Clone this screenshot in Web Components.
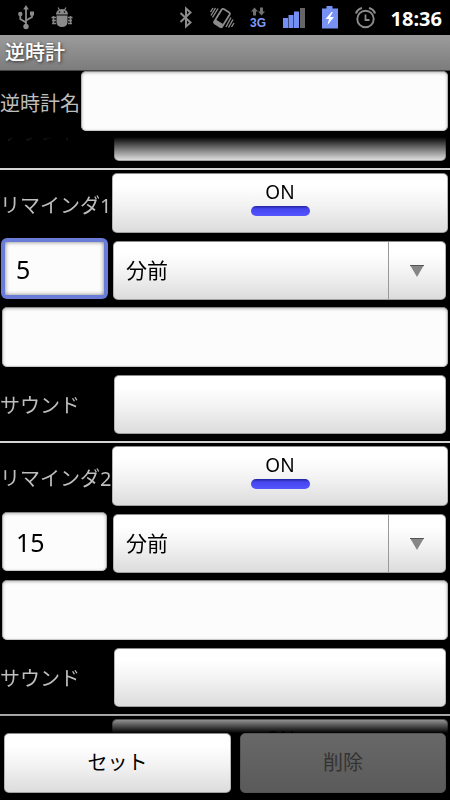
<!DOCTYPE html>
<html lang="ja">
<head>
<meta charset="utf-8">
<meta name="viewport" content="width=device-width, initial-scale=1">
<title>逆時計</title>
<style>
  html, body { margin: 0; height: 100%; background: #000; }
  body { font: 20px/24px "Noto Sans", "Noto Sans CJK JP", sans-serif; color: #bebebe; }
</style>
</head>
<body>
<countdown-app></countdown-app>

<script>
const CONTROLS = `
  * { box-sizing: border-box; }
  button, input, select { font: inherit; color: #000; margin: 0; border-radius: 5px; outline: none; min-width: 0; width: 100%; }
  button, select {
    border: 1px solid; border-color: #8c8c8c #b4b4b4 #a0a0a0;
    background: linear-gradient(#fff 20%, #f2f2f2 55%, #dcdcdc);
  }
  input {
    border: 1px solid; border-color: #8a8a8a #b0b0b0 #c8c8c8;
    background: #fcfcfc; box-shadow: inset 0 1px 3px #bbb;
    height: 60px; padding: 0 13px; font-size: 25px;
  }
  label { white-space: nowrap; padding-top: 6px; }
`;

function define(name, css, html, setup) {
  customElements.define(name, class extends HTMLElement {
    connectedCallback() {
      if (this.shadowRoot) return;
      const root = this.attachShadow({ mode: 'open' });
      root.innerHTML = `<style>${CONTROLS}${css}</style>${typeof html === 'function' ? html(this) : html}`;
      if (setup) setup(this, root);
    }
  });
}

const ICONS = {
  usb: `<g fill="none" stroke="#8b8b8b" stroke-width="1.8"><path d="M13 3V21M13 17.5L7.300 14V9M13 15.500L19 12V8"/></g>
    <g fill="#8b8b8b"><path d="M13 0l2.800 4.500h-5.600z"/><circle cx="13" cy="21.500" r="2.700"/><circle cx="7.300" cy="9" r="2.200"/><rect x="17" y="6.500" width="4" height="4"/></g>`,
  bug: `<g fill="#8b8b8b"><path d="M7 9.500a6 5.500 0 0 1 12 0z"/><path d="M7.500 10.500h11v7a5.500 4.500 0 0 1-11 0z"/></g>
    <path d="M9 2.500l1.800 3M17 2.500l-1.800 3" stroke="#8b8b8b" stroke-width="1.200"/>
    <path d="M2.500 12.500h4.500M19 12.500h4.500M3 15.500h4M19 15.500h4M3 18.500h4M19 18.500h4M4.500 11v8M21.500 11v8" stroke="#858585" stroke-width="1.600"/>
    <circle cx="10.500" cy="7" r=".8" fill="#000"/><circle cx="15.500" cy="7" r=".8" fill="#000"/>`,
  bluetooth: `<path d="M7.500 8l10 9.500-4.500 4V3.500l4.500 4-10 9.500" fill="none" stroke="#8b8b8b" stroke-width="2"/>`,
  vibrate: `<g transform="rotate(32 13 13)"><rect x="8.300" y="4.500" width="9.400" height="17" rx="1.500" fill="none" stroke="#8b8b8b" stroke-width="1.800"/><rect x="8" y="17.500" width="10" height="4" fill="#8b8b8b"/></g>
    <path d="M6.500 3L2 10.500M9 3.500L3.500 12.500M4 3L1.500 7M19.500 22.500L24 14.500M17 22L22 12.500M22.500 22L25 18" stroke="#8b8b8b" stroke-width="1.400"/>`,
  data: `<path d="M9.500 2.500l3.500 4h-2v4h-3v-4h-2zM16.500 10.500l-3.500-4h2v-4h3v4h2z" fill="#707070"/>
    <text x="13" y="22" text-anchor="middle" font-family="Liberation Sans, sans-serif" font-weight="700" font-size="12" fill="#809bf5">3G</text>`,
  signal: `<g fill="#7590f4"><path d="M2 13h5v10H2z"/><path d="M7.500 10h5v13h-5z"/><path d="M13 6.500h5V23h-5z"/></g><path d="M19 3h5v20h-5z" fill="#666"/>`,
  battery: `<path d="M9.500 1h6v2.500H21V23.500H5V3.500h4.500z" fill="#7690f3"/><path d="M14.500 7L8.500 14h3.500l-1.500 6 6.500-8h-4l3-5z" fill="#fff"/>`,
  alarm: `<g fill="none" stroke="#8b8b8b"><circle cx="12.500" cy="14" r="8.200" stroke-width="1.900"/><path d="M12.500 9.500v5.500h4" stroke-width="1.800"/><path d="M3 8.500Q4 4.500 9 3M22 8.500Q21 4.500 16 3" stroke-width="2.200"/></g>`
};

define('status-icon', `:host { display: block; width: 26px; height: 26px; } svg { display: block; }`,
  el => `<svg width="26" height="26" viewBox="0 0 26 26" aria-hidden="true">${ICONS[el.getAttribute('name')]}</svg>`);

define('status-bar', `
  :host { display: flex; align-items: center; gap: 10px; height: 35px; padding: 0 8px 0 13px; background: #000; box-sizing: border-box; }
  .space { flex: 1; }
  time { color: #fff; font-weight: 700; padding: 2px 0 0 2px; }
`, `
  <status-icon name="usb"></status-icon><status-icon name="bug"></status-icon><span class="space"></span>
  <status-icon name="bluetooth"></status-icon><status-icon name="vibrate"></status-icon><status-icon name="data"></status-icon>
  <status-icon name="signal"></status-icon><status-icon name="battery"></status-icon><status-icon name="alarm"></status-icon>
  <time><slot></slot></time>`);

define('title-bar', `
  :host { display: flex; align-items: center; height: 36px; padding: 0 5px; box-sizing: border-box;
    background: linear-gradient(#9c9c9c, #7c7c7c); border-bottom: 1px solid #444; }
  h1 { margin: 0; font: inherit; font-weight: 500; color: #fff; text-shadow: 1px 1px 3px #333; }
`, `<h1><slot></slot></h1>`);

define('name-row', `
  :host { display: grid; grid-template-columns: 78px 1fr; gap: 3px; align-items: center; padding: 0 2px 6px 0; }
`, `<label for="name"><slot></slot></label><input id="name" type="text">`);

define('sound-row', `
  :host { display: grid; grid-template-columns: 110px 1fr; gap: 4px; align-items: center; padding: 0 4px 7px 0; }
  button { height: 59px; }
  label { padding-top: 2px; }
`, `<label for="sound">サウンド</label><button id="sound" type="button"></button>`);

define('toggle-button', `
  :host { display: block; }
  button { display: flex; flex-direction: column; align-items: center; gap: 2px; height: 60px; padding: 6px 0 0; font-size: 19px; }
  i { width: 59px; height: 10px; border-radius: 5px; background: linear-gradient(#2222a0, #4646ee 30%, #5555ff); }
`, `<button type="button" aria-pressed="true"><slot></slot><i></i></button>`,
  (el, root) => root.querySelector('button').setAttribute('aria-label', el.getAttribute('label')));

define('drop-down', `
  :host { display: grid; grid-template-columns: 1fr 59px; }
  select { appearance: none; grid-area: 1 / 1 / 2 / 3; height: 59px; padding: 0 70px 2px 12px; font-size: 21px; }
  span { grid-area: 1 / 2; display: grid; place-items: center; margin: 1px; border-left: 1px solid #999; pointer-events: none; }
`, `<select aria-label="単位"><option>分前</option><option>時間前</option></select>
  <span><svg width="14" height="12" viewBox="0 0 14 12"><path d="M0 0h14L7 12z" fill="#868686"/><path d="M0 .5h14" stroke="#555"/></svg></span>`);

define('reminder-section', `
  :host { display: block; border-top: 2px solid #d4d4d4; padding-top: 3px; }
  .head { display: grid; grid-template-columns: 112px 1fr; align-items: center; padding: 0 2px 6px 0; }
  .when { display: grid; grid-template-columns: 105px 1fr; gap: 6px; padding: 0 4px 7px 2px; }
  .when input { height: 59px; }
  drop-down { margin-top: 2px; }
  .note { padding: 0 2px 8px; }
  .note input { display: block; }
  :host([active]) .when input { border: 3px solid #6a7bd8; box-shadow: 0 0 0 1px #6a7bd8, inset 0 0 4px #777; padding: 0 11px; }
`, el => {
  const label = el.getAttribute('label');
  const head = `<div class="head"><label>${label}</label><toggle-button label="${label}">ON</toggle-button></div>`;
  if (el.hasAttribute('collapsed')) return head;
  return `${head}
  <div class="when"><input type="text" inputmode="numeric" aria-label="時間" value="${el.getAttribute('value')}"><drop-down></drop-down></div>
  <div class="note"><input type="text" aria-label="メモ"></div>
  <sound-row></sound-row>`;
}, (el, root) => {
  root.querySelector('label').addEventListener('click', () =>
    root.querySelector('toggle-button').shadowRoot.querySelector('button').click());
});

define('action-bar', `
  :host { display: grid; grid-template-columns: 227fr 206fr; gap: 9px; padding: 0 4px 7px; }
  button { height: 60px; }
  button:disabled { color: #333; background: linear-gradient(#686868, #5a5a5a); border-color: #555; }
`, `<button type="button">セット</button><button type="button" disabled>削除</button>`);

define('scroll-pane', `
  :host { display: block; flex: 1; min-height: 0; overflow-y: auto; scrollbar-width: none;
    mask-image: linear-gradient(transparent, #000 23px, #000 calc(100% - 23px), transparent); }
`, `<slot></slot>`);

define('countdown-app', `
  :host { display: flex; flex-direction: column; height: 100vh; }
`, `
  <status-bar>18:36</status-bar>
  <title-bar>逆時計</title-bar>
  <name-row>逆時計名</name-row>
  <scroll-pane>
    <sound-row></sound-row>
    <reminder-section label="リマインダ1" value="5" active></reminder-section>
    <reminder-section label="リマインダ2" value="15"></reminder-section>
    <reminder-section label="リマインダ3" collapsed></reminder-section>
  </scroll-pane>
  <action-bar></action-bar>`,
  (el, root) => { root.querySelector('scroll-pane').scrollTop = 35; });
</script>
</body>
</html>
